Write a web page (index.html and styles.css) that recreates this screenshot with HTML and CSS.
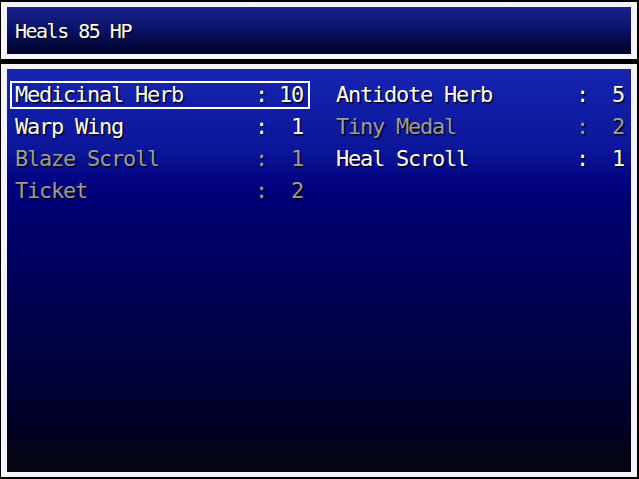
FILE: index.html
```html
<!DOCTYPE html>
<html lang="en">
<head>
  <meta charset="UTF-8" />
  <title>Items</title>
  <link rel="stylesheet" href="styles.css">
</head>
<body>
  <div class="window help-window">
    <div class="help-text">Heals 85 HP</div>
  </div>

  <div class="window item-window">
    <div class="item-list">
      <div class="item selected"><span class="name">Medicinal Herb</span><span class="colon">:</span><span class="count">10</span></div>
      <div class="item"><span class="name">Antidote Herb</span><span class="colon">:</span><span class="count">5</span></div>
      <div class="item"><span class="name">Warp Wing</span><span class="colon">:</span><span class="count">1</span></div>
      <div class="item disabled"><span class="name">Tiny Medal</span><span class="colon">:</span><span class="count">2</span></div>
      <div class="item disabled"><span class="name">Blaze Scroll</span><span class="colon">:</span><span class="count">1</span></div>
      <div class="item"><span class="name">Heal Scroll</span><span class="colon">:</span><span class="count">1</span></div>
      <div class="item disabled"><span class="name">Ticket</span><span class="colon">:</span><span class="count">2</span></div>
    </div>
  </div>
</body>
</html>
```

FILE: styles.css
```css
html, body {
  height: 100%;
}
body {
  margin: 0;
  box-sizing: border-box;
  background-color: #000;
  padding: 2px 2px 2px 1px;
  display: flex;
  flex-direction: column;
  gap: 5px;
  font-family: "DejaVu Sans Mono", "Liberation Mono", monospace;
  color: #fff;
  text-shadow: 1px 1px 0 #000, 2px 2px 0 rgba(0, 0, 0, 0.4);
}
.window {
  box-sizing: border-box;
  border-style: solid;
  border-color: #f6f4f8;
  border-width: 5px 6px;
}
.help-window {
  height: 57px;
  display: flex;
  align-items: center;
  padding-left: 8px;
  background: linear-gradient(#16228e, #0a1266 50%, #000024);
}
.help-text {
  font-size: 20px;
  line-height: 24px;
  letter-spacing: -1.5px;
}
.item-window {
  flex: 1;
  padding: 12px 3px;
  background: linear-gradient(#1624b0 0%, #0c169a 20%, #00007a 30%, #00005c 50%, #000044 68%, #00002c 85%, #05050f 100%);
}
.item-list {
  display: grid;
  grid-template-columns: 300px 300px;
  column-gap: 21px;
  row-gap: 4px;
}
.item {
  box-sizing: border-box;
  height: 28px;
  border: 2px solid transparent;
  padding: 0 5px 0 3px;
  display: grid;
  grid-template-columns: 240px 24px 24px;
  font-size: 22px;
  line-height: 23px;
  letter-spacing: -1.24px;
  white-space: nowrap;
}
.item.selected {
  border-color: #fff;
}
.item.disabled {
  color: #9c9c9c;
}
.count {
  text-align: right;
}
```
